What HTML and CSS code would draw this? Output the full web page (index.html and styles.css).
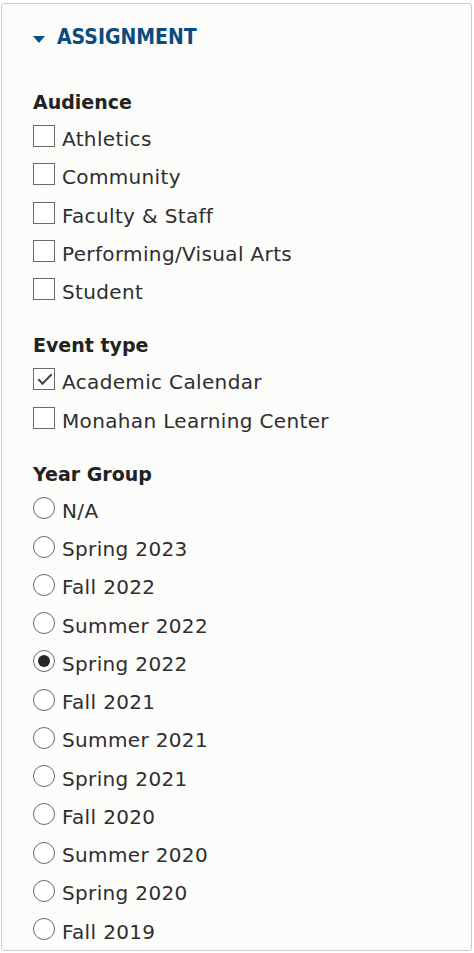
FILE: index.html
```html
<!DOCTYPE html>
<html lang="en">
<head>
    <meta charset="UTF-8">
    <meta name="viewport" content="width=device-width, initial-scale=1.0">
    <title>Assignment</title>
    <link rel="stylesheet" href="styles.css">
</head>
<body>
    <details class="panel" open>
        <summary class="panel-title">ASSIGNMENT</summary>
        <div class="panel-body">
            <div class="group">
                <div class="group-label">Audience</div>
                <div class="options">
                    <label class="option"><input type="checkbox" name="audience"><span>Athletics</span></label>
                    <label class="option"><input type="checkbox" name="audience"><span>Community</span></label>
                    <label class="option"><input type="checkbox" name="audience"><span>Faculty &amp; Staff</span></label>
                    <label class="option"><input type="checkbox" name="audience"><span>Performing/Visual Arts</span></label>
                    <label class="option"><input type="checkbox" name="audience"><span>Student</span></label>
                </div>
            </div>

            <div class="group">
                <div class="group-label">Event type</div>
                <div class="options">
                    <label class="option"><input type="checkbox" name="event_type" checked><span>Academic Calendar</span></label>
                    <label class="option"><input type="checkbox" name="event_type"><span>Monahan Learning Center</span></label>
                </div>
            </div>

            <div class="group">
                <div class="group-label">Year Group</div>
                <div class="options">
                    <label class="option"><input type="radio" name="year"><span>N/A</span></label>
                    <label class="option"><input type="radio" name="year"><span>Spring 2023</span></label>
                    <label class="option"><input type="radio" name="year"><span>Fall 2022</span></label>
                    <label class="option"><input type="radio" name="year"><span>Summer 2022</span></label>
                    <label class="option"><input type="radio" name="year" checked><span>Spring 2022</span></label>
                    <label class="option"><input type="radio" name="year"><span>Fall 2021</span></label>
                    <label class="option"><input type="radio" name="year"><span>Summer 2021</span></label>
                    <label class="option"><input type="radio" name="year"><span>Spring 2021</span></label>
                    <label class="option"><input type="radio" name="year"><span>Fall 2020</span></label>
                    <label class="option"><input type="radio" name="year"><span>Summer 2020</span></label>
                    <label class="option"><input type="radio" name="year"><span>Spring 2020</span></label>
                    <label class="option"><input type="radio" name="year"><span>Fall 2019</span></label>
                </div>
            </div>
        </div>
    </details>
</body>
</html>
```

FILE: styles.css
```css
html, body {
    height: 100%;
    overflow: hidden;
}

body {
    margin: 0;
    background: #fff;
    font-family: "DejaVu Sans", sans-serif;
    color: #333;
}

.panel {
    margin: 3px 2px 0 1px;
    height: 948px;
    box-sizing: border-box;
    overflow: hidden;
    padding: 21px 0 0 31px;
    background: #fcfcfa;
    border: 1px solid #cbcbcb;
    border-radius: 3px;
}

.panel-title {
    list-style: none;
    display: flex;
    align-items: center;
    gap: 12px;
    height: 24px;
    margin-bottom: 41px;
    font-family: "DejaVu Sans Condensed", "DejaVu Sans", sans-serif;
    font-stretch: condensed;
    font-weight: bold;
    font-size: 21px;
    color: #0b4c7f;
    cursor: pointer;
}

.panel-title::-webkit-details-marker {
    display: none;
}

.panel-title::before {
    content: "";
    margin-top: 5px;
    border-left: 6px solid transparent;
    border-right: 6px solid transparent;
    border-top: 7px solid #0b4c7f;
}

.group + .group {
    margin-top: 22px;
}

.group-label {
    font-size: 19px;
    font-weight: bold;
    line-height: 24px;
    color: #222;
}

.options {
    display: flex;
    flex-direction: column;
    margin-top: 6px;
}

.option {
    display: flex;
    align-items: center;
    gap: 7px;
    height: 38.25px;
    font-size: 20px;
    letter-spacing: 0.35px;
    color: #2e2e2e;
}

.option input {
    appearance: none;
    -webkit-appearance: none;
    position: relative;
    flex: none;
    width: 22px;
    height: 22px;
    margin: 0 0 6px 0;
    background: #fff;
    border: 1px solid #6a6a6a;
}

.option input[type="radio"] {
    border-radius: 50%;
    margin-bottom: 5px;
}

.option input[type="checkbox"]:checked::after {
    content: "";
    position: absolute;
    left: 4px;
    top: 5px;
    width: 12px;
    height: 5px;
    border-left: 2px solid #444;
    border-bottom: 2px solid #444;
    transform: rotate(-45deg);
}

.option input[type="radio"]:checked::after {
    content: "";
    position: absolute;
    left: 4px;
    top: 4px;
    width: 12px;
    height: 12px;
    border-radius: 50%;
    background: #262626;
}
```
